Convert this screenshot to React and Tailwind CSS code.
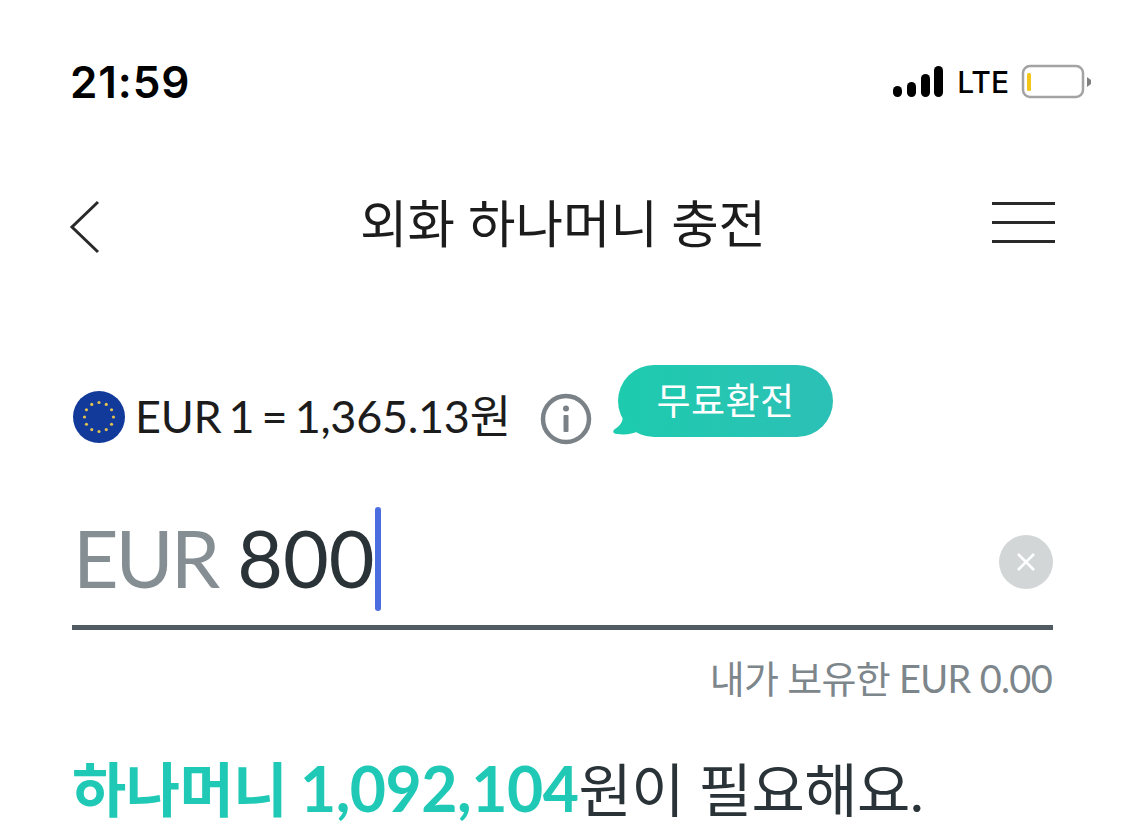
import React from 'react';

const euStars = Array.from({ length: 12 }, (_, i) => {
  const a = (i * Math.PI) / 6;
  return { x: 26 + 14.5 * Math.sin(a), y: 26 - 14.5 * Math.cos(a) };
});

const App = () => {
  return (
    <div className="w-[1125px] h-[836px] overflow-hidden bg-white font-['Lato','Noto_Sans_CJK_KR',sans-serif]">
      {/* Status bar */}
      <div className="h-[112px] pl-[70px] pr-[34px] pt-[55px] flex items-start justify-between">
        <span className="text-[44px] leading-[54px] font-['Inter',sans-serif] font-semibold text-black tracking-[0.9px]">21:59</span>
        <div className="flex items-center pt-[9px]">
          <svg width="52" height="34" viewBox="0 0 52 34" fill="#000">
            <rect x="1" y="21" width="9" height="11" rx="4.5" />
            <rect x="15" y="17" width="9" height="15" rx="4.5" />
            <rect x="29" y="9" width="9" height="23" rx="4.5" />
            <rect x="42" y="1" width="9" height="31" rx="4.5" />
          </svg>
          <span className="ml-[13px] text-[30px] leading-[34px] font-['Inter',sans-serif] font-medium text-black">LTE</span>
          <svg className="ml-[12px]" width="70" height="36" viewBox="0 0 70 36">
            <rect x="2" y="2" width="60" height="31" rx="7" fill="none" stroke="#a3a3a3" strokeWidth="2.5" />
            <rect x="6" y="9" width="4" height="18" rx="1.5" fill="#f5c518" />
            <path d="M66 13l4 3v4l-4 3z" fill="#808080" />
          </svg>
        </div>
      </div>

      {/* Header */}
      <div className="h-[224px] pl-[69px] pr-[70px] pt-[79px] flex items-start justify-between">
        <svg className="mt-[8px]" width="32" height="56" viewBox="0 0 32 56" fill="none" stroke="#2a2a2a" strokeWidth="3">
          <path d="M29 3L3 28l26 25" />
        </svg>
        <h1 className="text-[51.6px] leading-[64px] font-normal text-[#1c1c1c] ml-[33px]">외화 하나머니 충전</h1>
        <div className="w-[63px] mt-[11px] flex flex-col gap-[16px]">
          <div className="h-[3px] bg-[#2a2a2a]" />
          <div className="h-[3px] bg-[#2a2a2a]" />
          <div className="h-[3px] bg-[#2a2a2a]" />
        </div>
      </div>

      {/* Exchange rate */}
      <div className="relative h-[170px] pl-[73px] flex items-start">
        <div className="mt-[53px] flex items-center">
          <svg width="52" height="52" viewBox="0 0 52 52">
            <circle cx="26" cy="26" r="26" fill="#123a9a" />
            {euStars.map((s, i) => (
              <circle key={i} cx={s.x} cy={s.y} r="1.6" fill="#e0c050" />
            ))}
          </svg>
          <span className="ml-[10px] -mt-[2px] text-[45px] leading-[54px] text-[#1c1c1c] tracking-[-0.3px] [word-spacing:-4px]">EUR 1 = 1,365.13원</span>
          <svg className="ml-[29px] mt-[4px]" width="52" height="52" viewBox="0 0 52 52">
            <circle cx="26" cy="26" r="23" fill="none" stroke="#7b8287" strokeWidth="4.5" />
            <circle cx="26" cy="15.5" r="3" fill="#7b8287" />
            <rect x="23.5" y="22" width="5" height="17" rx="1" fill="#7b8287" />
          </svg>
        </div>
        <div className="absolute left-[613px] top-[29px]">
          <div className="w-[215px] h-[72px] ml-[5px] rounded-[36px] bg-gradient-to-r from-[#1dcbae] to-[#2cc0b6] flex items-center justify-center">
            <span className="text-[37px] leading-[44px] text-white tracking-[0.5px]">무료환전</span>
          </div>
          <svg className="absolute left-0 bottom-0" width="30" height="22" viewBox="0 0 30 22" fill="#1dcbae">
            <path d="M10 0c0 7-3 11-8 14-3 2-2 5 2 5 9 1 15 0 22-3z" />
          </svg>
        </div>
      </div>

      {/* Amount input */}
      <div className="mx-[72px] h-[124px] border-b-[5px] border-[#515c62] flex items-start justify-between">
        <div className="flex items-start pt-[1px] pl-[1px]">
          <span className="mt-[3px] text-[79px] leading-[96px] text-[#858e93] tracking-[-3px]">EUR</span>
          <span className="mt-[3px] ml-[20px] text-[79px] leading-[96px] text-[#2a3338]">800</span>
          <div className="w-[6px] h-[104px] rounded-[3px] bg-[#4a6ee0]" />
        </div>
        <div className="mt-[29px] w-[54px] h-[54px] rounded-full bg-[#d2d6d6] flex items-center justify-center">
          <svg width="20" height="20" viewBox="0 0 20 20" stroke="#fff" strokeWidth="2.5" fill="none">
            <path d="M2 2l16 16M18 2L2 18" />
          </svg>
        </div>
      </div>

      {/* Balance */}
      <div className="mx-[72px] pr-[1px] pt-[24px] text-right">
        <span className="text-[38px] leading-[48px] text-[#7d868b] tracking-[-0.7px]">내가 보유한 EUR 0.00</span>
      </div>

      {/* Required amount */}
      <div className="mx-[72px] pt-[51px] text-[58px] leading-[70px] text-[#2a3338] whitespace-nowrap tracking-[-0.5px]">
        <span className="text-[59px] font-bold text-[#1fc9b5] [word-spacing:-1px]">하나머니 <span className="text-[62.5px]">1,092,104</span></span>원이 필요해요.
      </div>
    </div>
  );
};

export default App;
